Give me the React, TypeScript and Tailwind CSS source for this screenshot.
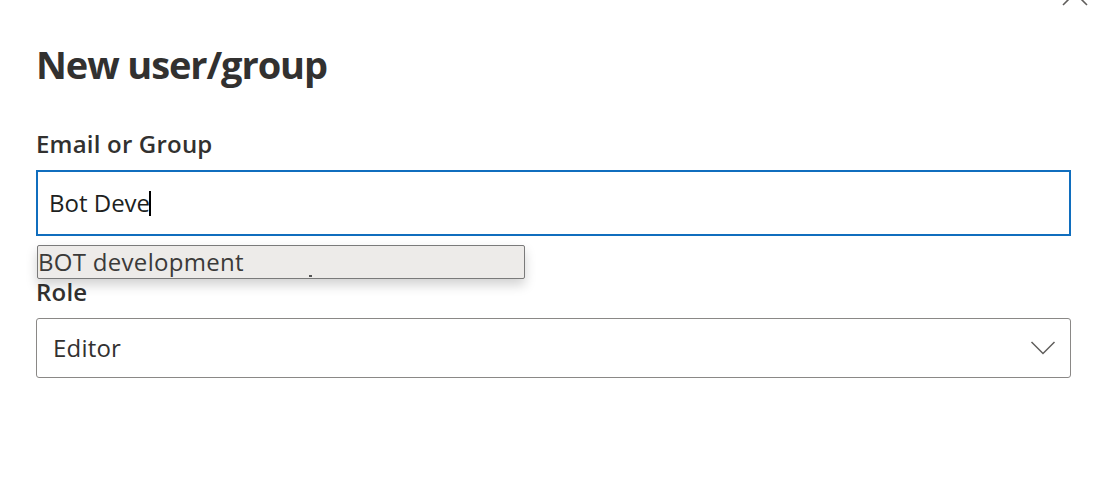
import React from 'react'

const font = { fontFamily: '"Open Sans", "Noto Sans", sans-serif' }

export default function App() {
    return (
        <div className="relative w-[1104px] h-[498px] bg-white overflow-hidden text-[#323130]" style={font}>
            {/* Close button, mostly scrolled out of view */}
            <svg className="absolute left-[1062px] top-[-20px]" width="26" height="26" viewBox="0 0 26 26" fill="none">
                <path d="M1 25 L25 1 M1 1 L25 25" stroke="#605e5c" strokeWidth="1.6" />
            </svg>

            <div className="flex flex-col pl-[36px] pr-[33px] pt-[40px]">
                <h1 className="text-[38px] leading-[48px] font-bold tracking-[-1.1px]">New user/group</h1>

                <label className="mt-[40px] text-[24px] leading-[32px] font-semibold tracking-[0.2px]">Email or Group</label>

                <div className="relative mt-[10px]">
                    <div className="flex items-center h-[66px] border-2 border-[#106ebe] px-[11px]">
                        <span className="text-[24px] leading-[32px] text-[#201f1e]">Bot Deve</span>
                        <span className="w-[2px] h-[25px] bg-black -ml-[1px]" />
                    </div>

                    {/* Autocomplete suggestion */}
                    <div className="absolute left-[1px] top-[75px] w-[488px] h-[34px] bg-[#edebe9] border border-[#7a7a7a] rounded-[2px] shadow-[0_6px_12px_rgba(0,0,0,0.18)] flex items-center z-10">
                        <span className="text-[24px] leading-[32px] tracking-[0.3px] text-[#3b3a39] -mt-[1px]">BOT development</span>
                        <span className="absolute left-[271px] bottom-[1px] w-[3px] h-[2px] bg-[#555]" />
                    </div>
                </div>

                <label className="mt-[40px] text-[24px] leading-[32px] font-semibold tracking-[0.2px]">Role</label>

                <div className="mt-[10px] flex items-center justify-between h-[60px] border border-[#8a8886] rounded-[3px] pl-[16px] pr-[14px]">
                    <span className="text-[24px] leading-[32px] text-[#323130] tracking-[0.2px]">Editor</span>
                    <svg width="26" height="16" viewBox="0 0 26 16" fill="none">
                        <path d="M1.5 2 L13 13.5 L24.5 2" stroke="#605e5c" strokeWidth="1.5" />
                    </svg>
                </div>
            </div>
        </div>
    )
}
